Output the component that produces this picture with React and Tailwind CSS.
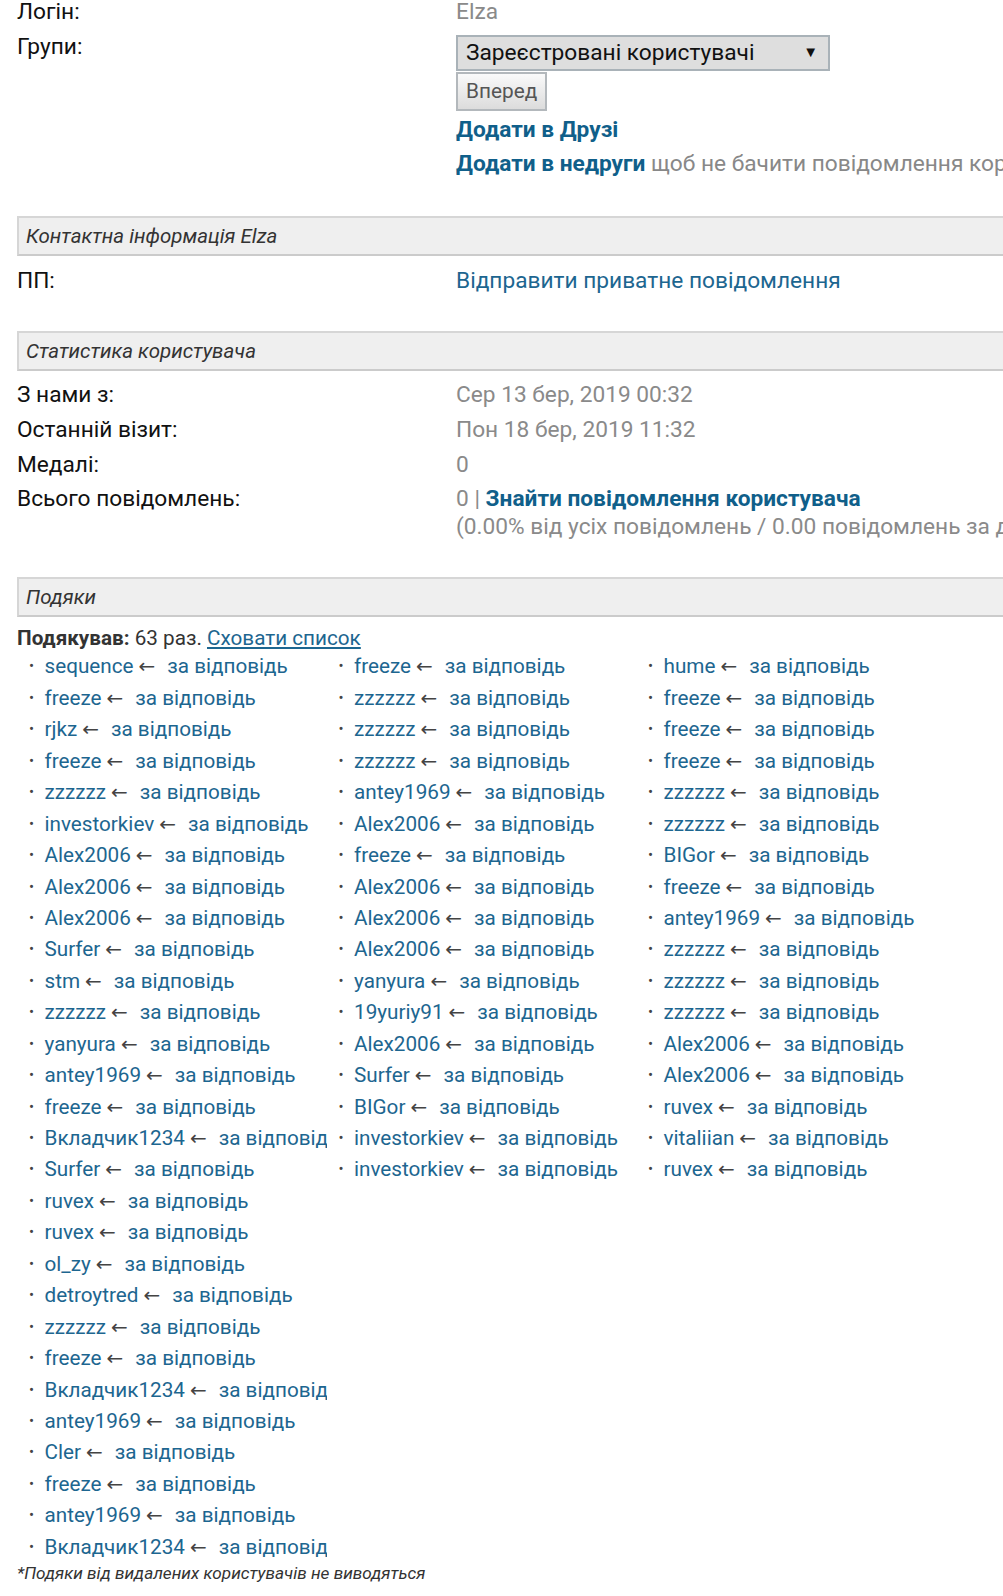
import React from "react";

const col1 = ["sequence","freeze","rjkz","freeze","zzzzzz","investorkiev","Alex2006","Alex2006","Alex2006","Surfer","stm","zzzzzz","yanyura","antey1969","freeze","Вкладчик1234","Surfer","ruvex","ruvex","ol_zy","detroytred","zzzzzz","freeze","Вкладчик1234","antey1969","Cler","freeze","antey1969","Вкладчик1234"];
const col2 = ["freeze","zzzzzz","zzzzzz","zzzzzz","antey1969","Alex2006","freeze","Alex2006","Alex2006","Alex2006","yanyura","19yuriy91","Alex2006","Surfer","BIGor","investorkiev","investorkiev"];
const col3 = ["hume","freeze","freeze","freeze","zzzzzz","zzzzzz","BIGor","freeze","antey1969","zzzzzz","zzzzzz","zzzzzz","Alex2006","Alex2006","ruvex","vitaliian","ruvex"];

function Header({ children }) {
  return (
    <div className="ml-[17px] w-[1100px] h-[40px] bg-[#efefef] border-y-2 border-l-2 border-t-[#d6d6d6] border-b-[#cbcbcb] border-l-[#d6d6d6] flex items-center pl-[7px] italic text-[20.5px] text-[#333]">
      {children}
    </div>
  );
}

function Col({ items }) {
  return (
    <ul className="w-[309.5px] shrink-0">
      {items.map((n, i) => (
        <li key={i} className="h-[31.45px] leading-[31.45px] flex items-center overflow-hidden whitespace-nowrap text-[20.7px]">
          <span className="w-[27.5px] shrink-0 pl-[12px] text-[#444] text-[15px]">•</span>
          <span className="text-[#1d6690]">{n}</span>
          <span className="text-[#444] ml-[5px] text-[20px]" style={{ fontFamily: "'DejaVu Sans', sans-serif" }}>←</span>
          <span className="text-[#1d6690] ml-[12px]">за відповідь</span>
        </li>
      ))}
    </ul>
  );
}

export default function App() {
  return (
    <div className="w-[1003px] h-[1596px] overflow-hidden bg-white text-[22.7px] text-[#111]" style={{ fontFamily: "Roboto, 'Noto Sans', sans-serif" }}>
      <div className="w-[1200px]">
        <div className="flex -mt-[5px] pl-[17px]">
          <div className="w-[439px] shrink-0">
            <div className="leading-[34.6px]">Логін:</div>
            <div className="leading-[34.6px]">Групи:</div>
          </div>
          <div className="flex flex-col items-start">
            <div className="leading-[34.6px] text-[#8a8a8a]">Elza</div>
            <div className="mt-[5px] w-[374px] h-[36px] bg-[#dedede] border-2 border-[#a9b2b8] flex items-center justify-between pl-[8px] pr-[10px] text-[#111]">
              <span>Зареєстровані користувачі</span>
              <span className="text-[15px]">▼</span>
            </div>
            <div className="mt-[1px] h-[39px] px-[8px] border-2 border-[#b3b8bc] bg-gradient-to-b from-[#fafafa] to-[#dcdcdc] text-[#555] text-[20.8px] flex items-center">Вперед</div>
            <div className="mt-[2px] leading-[34.6px] font-bold text-[#105f8a]">Додати в Друзі</div>
            <div className="leading-[34.6px] whitespace-nowrap">
              <span className="font-bold text-[#105f8a]">Додати в недруги</span>
              <span className="text-[#888]"> щоб не бачити повідомлення користувача</span>
            </div>
          </div>
        </div>

        <div className="mt-[34.5px]">
          <Header>Контактна інформація Elza</Header>
        </div>
        <div className="flex pl-[17px] mt-[8px]">
          <div className="w-[439px] shrink-0 leading-[34.6px]">ПП:</div>
          <div className="leading-[34.6px] text-[#1d6690]">Відправити приватне повідомлення</div>
        </div>

        <div className="mt-[32px]">
          <Header>Статистика користувача</Header>
        </div>
        <div className="pl-[17px] mt-[7.5px]">
          <div className="flex">
            <div className="w-[439px] shrink-0 leading-[34.6px]">З нами з:</div>
            <div className="leading-[34.6px] text-[#8a8a8a]">Сер 13 бер, 2019 00:32</div>
          </div>
          <div className="flex">
            <div className="w-[439px] shrink-0 leading-[34.6px]">Останній візит:</div>
            <div className="leading-[34.6px] text-[#8a8a8a]">Пон 18 бер, 2019 11:32</div>
          </div>
          <div className="flex">
            <div className="w-[439px] shrink-0 leading-[34.6px]">Медалі:</div>
            <div className="leading-[34.6px] text-[#8a8a8a]">0</div>
          </div>
          <div className="flex">
            <div className="w-[439px] shrink-0 leading-[34.6px]">Всього повідомлень:</div>
            <div className="whitespace-nowrap">
              <div className="leading-[34.6px]">
                <span className="text-[#8a8a8a]">0 | </span>
                <span className="font-bold text-[#105f8a]">Знайти повідомлення користувача</span>
              </div>
              <div className="leading-[26px] -mt-[2.8px] text-[#8a8a8a]">(0.00% від усіх повідомлень / 0.00 повідомлень за день)</div>
            </div>
          </div>
        </div>

        <div className="mt-[37px]">
          <Header>Подяки</Header>
        </div>
        <div className="pl-[17px] mt-[8.5px]">
          <div className="leading-[26px] text-[#333] text-[20.7px]">
            <span className="font-bold">Подякував:</span> 63 раз. <span className="text-[#1d6690] underline">Сховати список</span>
          </div>
          <div className="flex items-start">
            <Col items={col1} />
            <Col items={col2} />
            <Col items={col3} />
          </div>
          <div className="leading-[20px] italic text-[17.2px] text-[#333]">*Подяки від видалених користувачів не виводяться</div>
        </div>
      </div>
    </div>
  );
}
